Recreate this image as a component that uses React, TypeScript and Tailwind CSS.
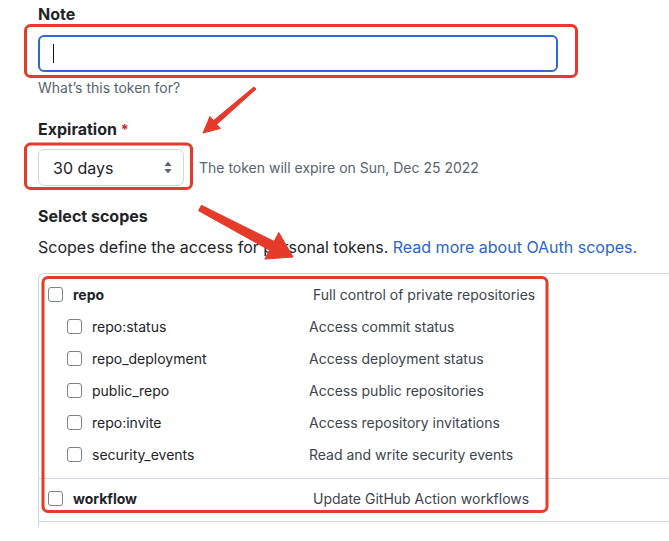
import React from "react"

const font = { fontFamily: "Inter, 'Liberation Sans', sans-serif" }

type Scope = { name: string; desc: string; sub?: boolean; bold?: boolean }

const repoScopes: Scope[] = [
  { name: "repo", desc: "Full control of private repositories", bold: true },
  { name: "repo:status", desc: "Access commit status", sub: true },
  { name: "repo_deployment", desc: "Access deployment status", sub: true },
  { name: "public_repo", desc: "Access public repositories", sub: true },
  { name: "repo:invite", desc: "Access repository invitations", sub: true },
  { name: "security_events", desc: "Read and write security events", sub: true },
]

function Checkbox() {
  return <span className="inline-block w-[15px] h-[15px] shrink-0 rounded-[3px] border border-[#7d848c] bg-white" />
}

function ScopeRow({ scope }: { scope: Scope }) {
  if (scope.sub) {
    return (
      <div className="flex items-center h-[32px] pl-[28px]">
        <Checkbox />
        <span className="ml-[10px] w-[217px] text-[14px] text-[#1f2328]">{scope.name}</span>
        <span className="text-[14px] text-[#3d444d]">{scope.desc}</span>
      </div>
    )
  }
  return (
    <div className="flex items-center h-[32px] pl-[9px]">
      <Checkbox />
      <span className="ml-[10px] w-[240px] text-[14px] font-bold text-[#1f2328]">{scope.name}</span>
      <span className="text-[14px] text-[#3d444d]">{scope.desc}</span>
    </div>
  )
}

function Annotations() {
  const red = "#e63a2b"
  return (
    <svg className="absolute left-0 top-0 pointer-events-none" width="669" height="541" viewBox="0 0 669 541">
      <rect x="25.5" y="25.5" width="551" height="51" rx="5" fill="none" stroke={red} strokeWidth="3" />
      <rect x="25.5" y="144" width="166" height="44.5" rx="5" fill="none" stroke={red} strokeWidth="3" />
      <rect x="43" y="277.5" width="504" height="234" rx="5" fill="none" stroke={red} strokeWidth="3" />
      <polygon
        points="256,89.1 216.7,124.4 220.3,128.5 203,133 209.9,116.5 213.5,120.6 254,86.9"
        fill={red}
        stroke={red}
        strokeWidth="1"
        strokeLinejoin="round"
      />
      <polygon
        points="198.6,210.7 269.5,250.2 264.8,259.1 293,257 278.8,232.5 274.1,241.4 201.4,205.3"
        fill={red}
        stroke={red}
        strokeWidth="1"
        strokeLinejoin="round"
      />
    </svg>
  )
}

export default function App() {
  return (
    <div className="relative w-[669px] h-[541px] overflow-hidden bg-white" style={font}>
      <div className="pl-[38px] pt-[4px]">
        <div className="text-[16px] leading-[20px] font-bold text-[#1f2328]">Note</div>
        <div className="mt-[11px] w-[520px] h-[37px] rounded-[6px] border-2 border-[#2f67d4] flex items-center">
          <span className="ml-[13px] w-px h-[19px] bg-[#111]" />
        </div>
        <div className="mt-[7px] text-[14px] leading-[18px] text-[#59636e]">What’s this token for?</div>

        <div className="mt-[22px] text-[16px] leading-[20px] font-bold text-[#1f2328]">
          Expiration <span className="text-[#d1242f] text-[14px]">*</span>
        </div>
        <div className="mt-[9px] flex items-center">
          <div className="w-[146px] h-[37px] rounded-[6px] border border-[#d0d7de] bg-white flex items-center justify-between pl-[14px] pr-[11px]">
            <span className="text-[16px] text-[#1f2328]">30 days</span>
            <svg width="8" height="13" viewBox="0 0 8 13" className="text-[#59636e]">
              <path d="M4 0.5 L7.5 5 H0.5 Z" fill="currentColor" />
              <path d="M4 12.5 L7.5 8 H0.5 Z" fill="currentColor" />
            </svg>
          </div>
          <span className="ml-[15px] text-[14px] text-[#59636e]">The token will expire on Sun, Dec 25 2022</span>
        </div>

        <div className="mt-[20px] text-[16px] leading-[20px] font-bold text-[#1f2328]">Select scopes</div>
        <div className="mt-[11px] text-[16px] leading-[20px] text-[#1f2328]">
          Scopes define the access for personal tokens.{" "}
          <span className="text-[#2a63d4]">Read more about OAuth scopes.</span>
        </div>

        <div className="mt-[16px] w-[700px] border-l border-t border-[#d0d7de] rounded-tl-[6px] pb-[6px]">
          <div className="pt-[4px] pb-[8px] border-b border-[#d0d7de]">
            {repoScopes.map((s) => (
              <ScopeRow key={s.name} scope={s} />
            ))}
          </div>
          <div className="pt-[3px] pb-[7px] border-b border-[#d0d7de]">
            <ScopeRow scope={{ name: "workflow", desc: "Update GitHub Action workflows", bold: true }} />
          </div>
        </div>
      </div>
      <Annotations />
    </div>
  )
}
